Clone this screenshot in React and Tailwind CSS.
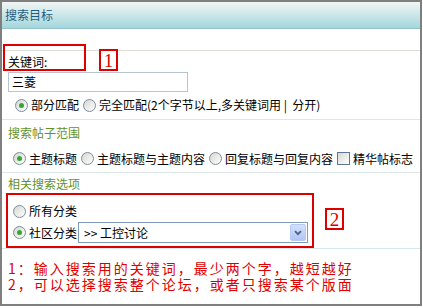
import React from "react";

const font = { fontFamily: '"Noto Sans CJK SC", "Noto Sans", sans-serif' };

const Radio = ({ checked, first }) => (
  <span
    className={`inline-flex items-center justify-center w-[13px] h-[13px] shrink-0 rounded-full border border-[#7b8d9e] bg-linear-to-br from-[#d6d6d0] to-white mr-[3px] ${
      first ? "ml-[5px]" : "ml-[4px]"
    }`}
  >
    {checked && <span className="w-[5px] h-[5px] rounded-full bg-[#33a833]" />}
  </span>
);

const Checkbox = () => (
  <span className="inline-block w-[13px] h-[13px] shrink-0 border border-[#5f7891] bg-linear-to-br from-[#d8d8d2] to-white ml-[4px] mr-[3px]" />
);

const NumBox = ({ n, className }) => (
  <div
    className={`absolute w-[19px] h-[22px] border-2 border-[#dd0000] bg-white flex items-center justify-center text-[#dd0000] text-[19px] leading-none ${className}`}
    style={{ fontFamily: '"Liberation Serif", serif' }}
  >
    {n}
  </div>
);

const App = () => {
  return (
    <div className="relative w-[423px] h-[308px] bg-white text-[12px] text-black" style={font}>
      <div className="w-[422px] h-[306px] border-2 border-[#7f7f7f] flex flex-col">
        <div className="h-[27px] shrink-0 bg-linear-to-b from-[#f2f5f5] to-[#a2d7dc] border-b border-[#96c2cc] pl-[3px] flex items-center text-[#1d5f82]">
          搜索目标
        </div>

        <div className="h-[22px] shrink-0 border-b border-[#dcdfd6]" />

        <div className="h-[69px] shrink-0 border-b border-[#dde6ea] pl-[6px] pt-[3px]">
          <div className="h-[16px] leading-[16px]">关键词:</div>
          <div className="mt-[2px] w-[180px] h-[20px] border border-[#b7c5d2] flex items-center pl-[3px]">三菱</div>
          <div className="mt-[4px] h-[18px] flex items-center -ml-[6px] pl-[8px]">
            <Radio checked first />
            <span>部分匹配</span>
            <Radio />
            <span>完全匹配(2个字节以上,多关键词用&nbsp;|&nbsp;&nbsp;分开)</span>
          </div>
        </div>

        <div className="h-[53px] shrink-0 border-b border-[#dde6ea]">
          <div className="h-[25px] pl-[6px] flex items-center text-[#63922a]">搜索帖子范围</div>
          <div className="h-[27px] flex items-center pl-[6px]">
            <Radio checked first />
            <span>主题标题</span>
            <Radio />
            <span>主题标题与主题内容</span>
            <Radio />
            <span>回复标题与回复内容</span>
            <Checkbox />
            <span>精华帖标志</span>
          </div>
        </div>

        <div className="h-[76px] shrink-0 border-b border-[#d6e8ec]">
          <div className="h-[22px] pl-[6px] flex items-center text-[#63922a]">相关搜索选项</div>
          <div className="mt-[5px] h-[22px] flex items-center pl-[6px]">
            <Radio first />
            <span>所有分类</span>
          </div>
          <div className="h-[21px] flex items-center pl-[6px]">
            <Radio checked first />
            <span>社区分类</span>
            <div className="ml-px w-[230px] h-[21px] border border-[#7f9db9] flex items-center justify-between pl-[5px] pr-px">
              <span>&gt;&gt; 工控讨论</span>
              <span className="w-[16px] h-[17px] rounded-[2px] border border-[#b6c8f4] bg-linear-to-b from-[#d3e0fd] to-[#b2c6f4] flex items-center justify-center">
                <svg width="8" height="6" viewBox="0 0 8 6">
                  <path d="M1 1.2 L4 4.2 L7 1.2" fill="none" stroke="#4d6185" strokeWidth="1.8" />
                </svg>
              </span>
            </div>
          </div>
        </div>

        <div className="flex-1 pt-[11px] pl-[6px] text-[14px] tracking-[2px] leading-[16px] text-[#e00000]">
          <div>1：输入搜索用的关键词，最少两个字，越短越好</div>
          <div>2，可以选择搜索整个论坛，或者只搜索某个版面</div>
        </div>
      </div>

      <div className="absolute left-[3px] top-[44px] w-[83px] h-[27px] border-2 border-[#dd0000]" />
      <NumBox n="1" className="left-[99px] top-[49px]" />
      <div className="absolute left-[6px] top-[193px] w-[308px] h-[55px] border-2 border-[#dd0000]" />
      <NumBox n="2" className="left-[325px] top-[208px]" />
    </div>
  );
};

export default App;
